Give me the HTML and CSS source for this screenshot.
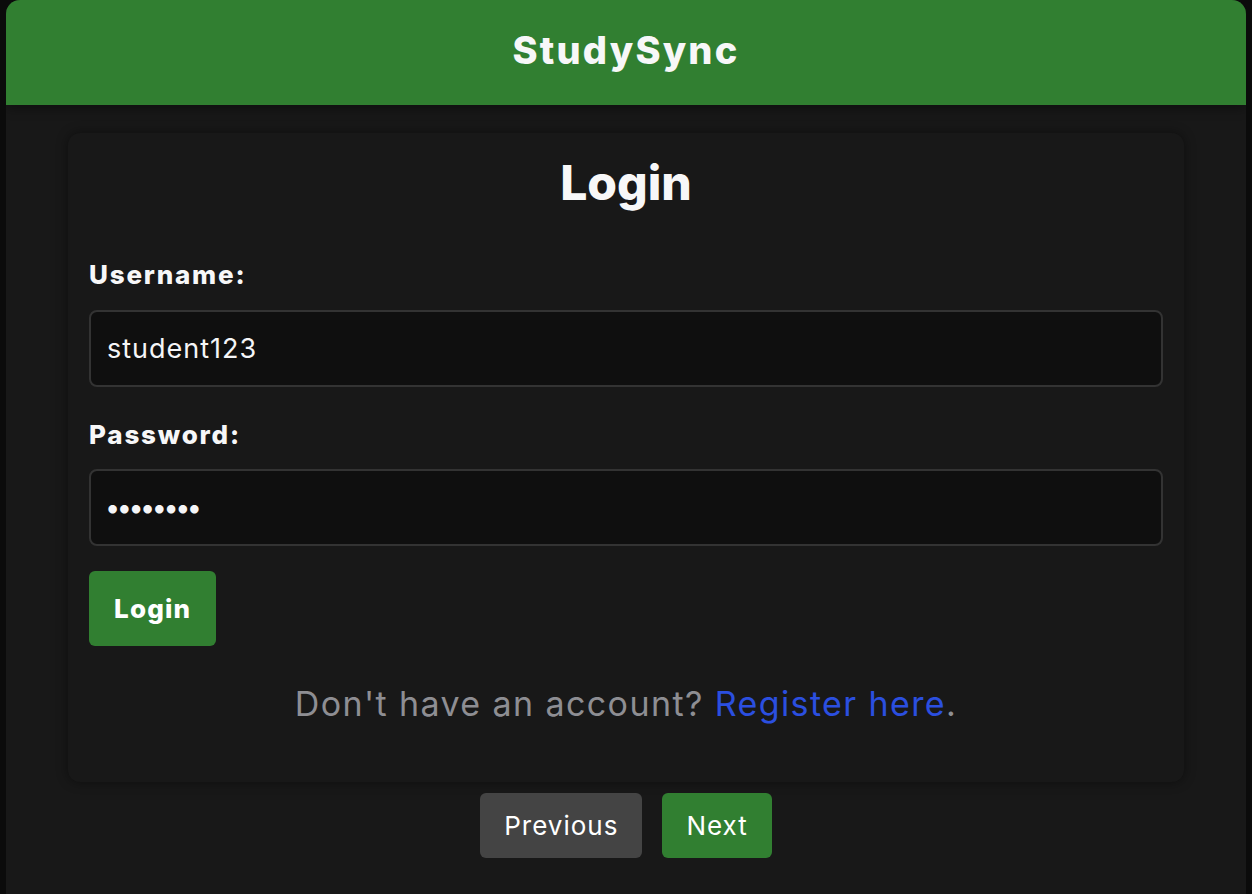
FILE: index.html
```html
<!DOCTYPE html>
<html lang="en">
<head>
<meta charset="utf-8">
<title>StudySync - Login</title>
<link rel="stylesheet" href="styles.css">
</head>
<body>
<div class="app">
  <header class="topbar">
    <h1 class="brand">StudySync</h1>
  </header>
  <main class="main">
    <section class="card">
      <h2 class="card-title">Login</h2>
      <form class="form">
        <label class="label" for="username">Username:</label>
        <input class="input" id="username" type="text" value="student123">
        <label class="label" for="password">Password:</label>
        <input class="input input-pass" id="password" type="password" value="password">
        <button class="btn-login" type="button">Login</button>
      </form>
      <p class="note">Don't have an account? <a class="link" href="#">Register here</a>.</p>
    </section>
    <nav class="pager">
      <button class="pager-btn pager-prev" type="button">Previous</button>
      <button class="pager-btn pager-next" type="button">Next</button>
    </nav>
  </main>
</div>
</body>
</html>
```
FILE: styles.css
```css
* { box-sizing: border-box; }
html, body { height: 100%; }
body {
  margin: 0;
  padding: 0 6px;
  background: #0b0b0b;
  font-family: "Inter", "Liberation Sans", sans-serif;
  color: #f5f5f7;
}
.app {
  min-height: 100%;
  background: #181818;
  border-radius: 14px 14px 0 0;
  overflow: hidden;
}
.topbar {
  height: 105px;
  padding-bottom: 6px;
  background: #317f31;
  display: flex;
  align-items: center;
  justify-content: center;
  box-shadow: 0 4px 10px rgba(0,0,0,0.35);
  position: relative;
  z-index: 1;
}
.brand {
  margin: 0;
  font-size: 38px;
  font-weight: 800;
  color: #f7f7f8;
  letter-spacing: 2.2px;
}
.main {
  display: flex;
  flex-direction: column;
  align-items: center;
  padding-top: 28px;
}
.card {
  width: 1116px;
  background: #181818;
  border-radius: 12px;
  box-shadow: 0 0 12px rgba(0,0,0,0.45);
  padding: 21px 21px 54px;
}
.card-title {
  margin: 0;
  text-align: center;
  font-size: 48px;
  line-height: 58px;
  font-weight: 800;
  color: #f7f7f8;
}
.form {
  display: flex;
  flex-direction: column;
  align-items: flex-start;
  margin-top: 45px;
}
.label {
  font-size: 26px;
  line-height: 36px;
  font-weight: 800;
  letter-spacing: 1.8px;
  color: #f7f7f8;
}
.input {
  width: 100%;
  height: 77px;
  margin-top: 17px;
  margin-bottom: 30px;
  background: #0f0f0f;
  border: 2px solid #333;
  border-radius: 8px;
  padding: 0 16px;
  font-family: inherit;
  font-size: 27px;
  letter-spacing: 1px;
  color: #f5f5f7;
  outline: none;
}
.input-pass {
  margin-top: 16px;
  margin-bottom: 25px;
  padding-left: 14px;
  letter-spacing: -3.5px;
}
.btn-login {
  height: 75px;
  padding: 0 25px;
  border: none;
  border-radius: 6px;
  background: #317f31;
  color: #fff;
  font-family: inherit;
  font-size: 26px;
  font-weight: 800;
  letter-spacing: 1.2px;
}
.note {
  margin: 34px 0 0;
  text-align: center;
  font-size: 34px;
  line-height: 48px;
  letter-spacing: 1.4px;
  color: #8e8e93;
}
.link {
  color: #2b4fe0;
  text-decoration: none;
}
.pager {
  display: flex;
  gap: 20px;
  margin-top: 11px;
}
.pager-btn {
  height: 65px;
  border: none;
  border-radius: 6px;
  padding: 0 24px;
  font-family: inherit;
  font-size: 26px;
  letter-spacing: 1px;
  color: #fff;
}
.pager-prev { background: #444; }
.pager-next { background: #317f31; }
```
